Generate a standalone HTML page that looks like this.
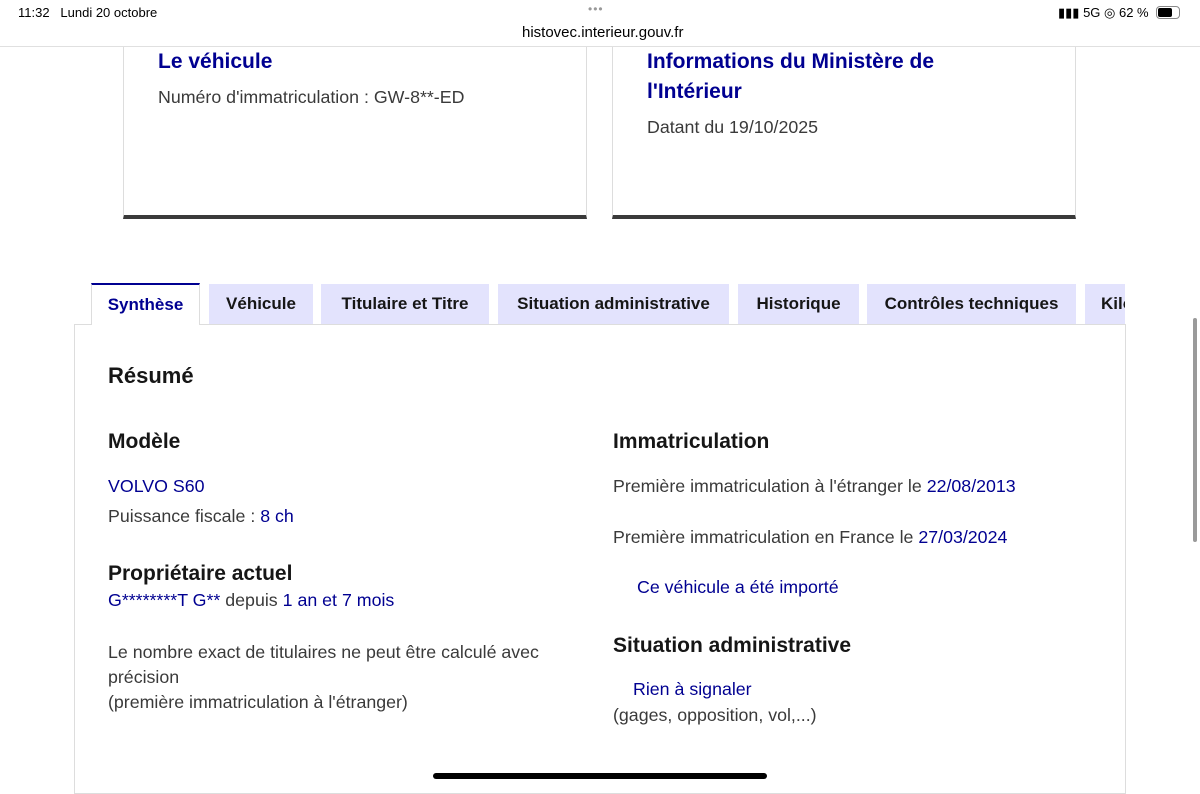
<!DOCTYPE html>
<html><head><meta charset="utf-8"><style>
*{margin:0;padding:0;box-sizing:border-box}
body{width:1200px;height:788px;overflow:hidden;background:#fff;font-family:"Liberation Sans",sans-serif;color:#3a3a3a;position:relative}
.a{position:absolute;white-space:nowrap}
.b{color:#000091}
.h{color:#000091;font-weight:bold;font-size:21px}
.t{font-size:17.8px}
.k{color:#161616;font-weight:bold;font-size:21px}
.tab{position:absolute;top:284px;height:40px;background:#e3e3fd;color:#161616;font-weight:bold;font-size:17px;line-height:40px;text-align:center;overflow:hidden}
</style></head><body>
<div class="a" style="left:18px;top:5px;font-size:13px;color:#000">11:32&nbsp;&nbsp; Lundi 20 octobre</div>
<div class="a" style="left:588px;top:2px;font-size:12px;color:#999;letter-spacing:1px">•••</div>
<div class="a" style="left:522px;top:24px;font-size:15px;color:#000">histovec.interieur.gouv.fr</div>
<div class="a" style="left:1058px;top:5px;font-size:13px;color:#000">▮▮▮ 5G ◎ 62 %</div>
<div class="a" style="left:1156px;top:6px;width:24px;height:13px;border:1px solid #888;border-radius:4px;padding:1px"><div style="width:14px;height:9px;background:#000;border-radius:2px"></div></div>
<div class="a" style="left:0;top:46px;width:1200px;height:1px;background:#e0e0e0"></div>

<div class="a" style="left:123px;top:47px;width:464px;height:172px;border:1px solid #ddd;border-top:none;border-bottom:4px solid #3a3a3a"></div>
<div class="a" style="left:612px;top:47px;width:464px;height:172px;border:1px solid #ddd;border-top:none;border-bottom:4px solid #3a3a3a"></div>
<div class="a h" style="left:158px;top:50px">Le véhicule</div>
<div class="a t" style="left:158px;top:87px">Numéro d'immatriculation : GW-8**-ED</div>
<div class="a h" style="left:647px;top:50px">Informations du Ministère de</div>
<div class="a h" style="left:647px;top:80px">l'Intérieur</div>
<div class="a t" style="left:647px;top:117px">Datant du 19/10/2025</div>

<div class="a" style="left:74px;top:324px;width:1052px;height:470px;border:1px solid #ddd"></div>
<div class="tab" style="left:91px;width:109px;background:#fff;color:#000091;border-top:2px solid #000091;border-left:1px solid #ddd;border-right:1px solid #ddd;height:42px;top:283px;line-height:40px">Synthèse</div>
<div class="tab" style="left:209px;width:104px">Véhicule</div>
<div class="tab" style="left:321px;width:168px">Titulaire et Titre</div>
<div class="tab" style="left:498px;width:231px">Situation administrative</div>
<div class="tab" style="left:738px;width:121px">Historique</div>
<div class="tab" style="left:867px;width:209px">Contrôles techniques</div>
<div class="tab" style="left:1085px;width:40px;text-align:left;padding-left:16px">Kilométrage</div>

<div class="a k" style="left:108px;top:363px;font-size:22px">Résumé</div>
<div class="a k" style="left:108px;top:430px">Modèle</div>
<div class="a t b" style="left:108px;top:476px">VOLVO S60</div>
<div class="a t" style="left:108px;top:506px">Puissance fiscale : <span class="b">8 ch</span></div>
<div class="a k" style="left:108px;top:562px">Propriétaire actuel</div>
<div class="a t" style="left:108px;top:590px"><span class="b">G********T G**</span> depuis <span class="b">1 an et 7 mois</span></div>
<div class="a t" style="left:108px;top:640px;line-height:25px">Le nombre exact de titulaires ne peut être calculé avec<br>précision<br>(première immatriculation à l'étranger)</div>

<div class="a k" style="left:613px;top:430px">Immatriculation</div>
<div class="a t" style="left:613px;top:476px">Première immatriculation à l'étranger le <span class="b">22/08/2013</span></div>
<div class="a t" style="left:613px;top:527px">Première immatriculation en France le <span class="b">27/03/2024</span></div>
<div class="a t b" style="left:637px;top:577px">Ce véhicule a été importé</div>
<div class="a k" style="left:613px;top:634px">Situation administrative</div>
<div class="a t b" style="left:633px;top:679px">Rien à signaler</div>
<div class="a t" style="left:613px;top:705px">(gages, opposition, vol,...)</div>

<div class="a" style="left:1193px;top:318px;width:4px;height:224px;background:#9a9a9a;border-radius:2px"></div>
<div class="a" style="left:433px;top:773px;width:334px;height:6px;background:#000;border-radius:3px"></div>
</body></html>
